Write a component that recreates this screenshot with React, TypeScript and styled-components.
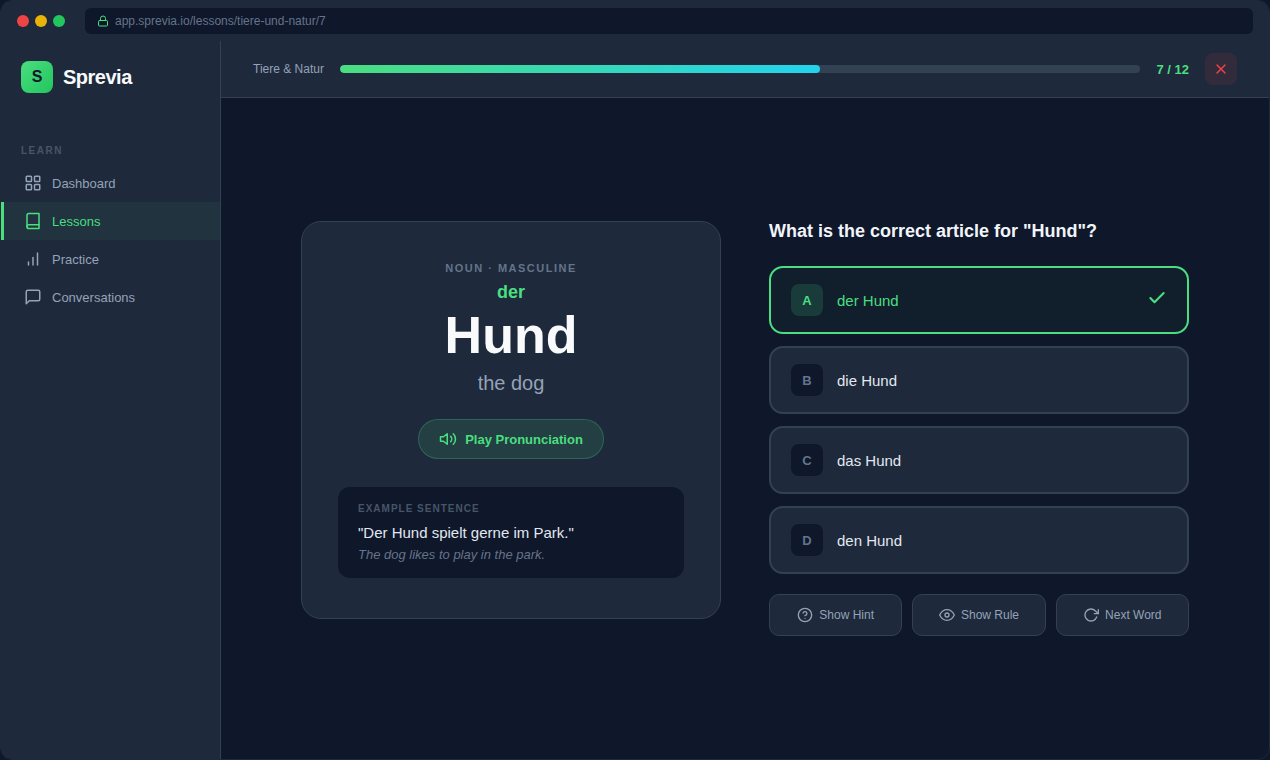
import React from "react";
import styled, { createGlobalStyle } from "styled-components";

const Global = createGlobalStyle`
  html, body { margin: 0; padding: 0; background: #0f172a; }
  * { box-sizing: border-box; }
  body { font-family: "Liberation Sans", Arial, sans-serif; }
`;
const Window = styled.div`
  width: 1270px; height: 760px; display: flex; flex-direction: column; overflow: hidden;
  background: #0f172a; border: 1px solid #1e293b; border-radius: 12px;
`;
const TitleBar = styled.div`
  height: 40px; flex: none; display: flex; align-items: center; gap: 20px; padding: 0 16px; background: #1e293b;
`;
const Dots = styled.div`display: flex; gap: 6px;`;
const Dot = styled.span<{ $c: string }>`width: 12px; height: 12px; border-radius: 50%; background: ${p => p.$c};`;
const Address = styled.div`
  flex: 1; height: 26px; background: #0f172a; border-radius: 6px; padding: 0 12px; display: flex; align-items: center; gap: 6px;
  font-size: 12px; color: #64748b;
  svg { color: #4ade80; }
`;
const Body = styled.div`flex: 1; display: flex; min-height: 0;`;
const Sidebar = styled.aside`
  width: 220px; flex: none; background: #1e293b; border-right: 1px solid #334155; display: flex; flex-direction: column; padding-top: 20px;
`;
const Brand = styled.div`display: flex; align-items: center; gap: 10px; padding: 0 20px; margin-bottom: 52px;`;
const Logo = styled.div`
  width: 32px; height: 32px; border-radius: 8px; background: linear-gradient(135deg, #4ade80, #22c55e); color: #0f172a;
  display: flex; align-items: center; justify-content: center; font-weight: 700; font-size: 16px;
`;
const BrandName = styled.div`font-size: 20px; font-weight: 700; letter-spacing: -0.5px; color: #f8fafc;`;
const SectionLabel = styled.div`font-size: 10px; font-weight: 700; letter-spacing: 1.5px; color: #475569; padding: 0 20px; margin-bottom: 7px; line-height: 12px;`;
const NavItem = styled.div<{ $active?: boolean }>`
  height: 38px; display: flex; align-items: center; gap: 10px; padding-left: 20px; font-size: 13px;
  color: ${p => (p.$active ? "#4ade80" : "#94a3b8")};
  background: ${p => (p.$active ? "rgba(74,222,128,0.06)" : "transparent")};
  border-left: 3px solid ${p => (p.$active ? "#4ade80" : "transparent")};
`;
const Main = styled.main`flex: 1; display: flex; flex-direction: column; min-width: 0;`;
const TopBar = styled.div`
  height: 57px; flex: none; background: #1e293b; border-bottom: 1px solid #334155; display: flex; align-items: center; gap: 16px; padding: 0 32px;
`;
const Topic = styled.span`font-size: 12px; color: #94a3b8;`;
const Track = styled.div`flex: 1; height: 8px; border-radius: 4px; background: #334155; overflow: hidden;`;
const Fill = styled.div`height: 100%; border-radius: 4px; background: linear-gradient(90deg, #4ade80, #22d3ee);`;
const Count = styled.span`font-size: 13px; font-weight: 700; color: #4ade80;`;
const CloseBtn = styled.button`
  width: 32px; height: 32px; border: 0; padding: 0; border-radius: 8px; background: rgba(239,68,68,0.1); color: #ef4444;
  display: flex; align-items: center; justify-content: center;
`;
const Content = styled.div`flex: 1; display: flex; align-items: center; justify-content: center; padding: 0 32px;`;
const Lesson = styled.div`display: flex; align-items: flex-start; gap: 48px;`;
const Card = styled.section`
  width: 420px; background: #1e293b; border: 1px solid #334155; border-radius: 20px; padding: 40px 36px;
  display: flex; flex-direction: column; align-items: center;
`;
const WordType = styled.div`font-size: 11px; font-weight: 700; letter-spacing: 1.5px; color: #64748b; line-height: 13px;`;
const Article = styled.div`font-size: 18px; font-weight: 700; color: #4ade80; line-height: 21px; margin-top: 7px;`;
const Word = styled.div`font-size: 52px; font-weight: 700; color: #f8fafc; line-height: 60px; margin-top: 2px;`;
const Meaning = styled.div`font-size: 20px; color: #94a3b8; line-height: 23px; margin-top: 7px;`;
const PlayBtn = styled.button`
  height: 40px; margin-top: 24px; padding: 0 20px; border-radius: 20px; border: 1px solid rgba(74,222,128,0.25); background: rgba(74,222,128,0.12);
  color: #4ade80; font: 700 13px "Liberation Sans", Arial, sans-serif; display: flex; align-items: center; gap: 8px;
`;
const Example = styled.div`
  align-self: stretch; margin-top: 28px; background: #0f172a; border-radius: 12px; padding: 16px 20px;
`;
const ExampleLabel = styled.div`font-size: 10px; font-weight: 700; letter-spacing: 1px; color: #475569; line-height: 12px;`;
const Sentence = styled.div`font-size: 15px; color: #e2e8f0; line-height: 17px; margin-top: 9px;`;
const Translation = styled.div`font-size: 13px; font-style: italic; color: #64748b; line-height: 15px; margin-top: 6px;`;
const Quiz = styled.section`width: 420px; display: flex; flex-direction: column;`;
const Question = styled.h2`margin: 0 0 24px; font-size: 18px; font-weight: 700; line-height: 21px; color: #f1f5f9;`;
const Options = styled.div`display: flex; flex-direction: column; gap: 12px;`;
const Option = styled.div<{ $ok?: boolean }>`
  height: 68px; display: flex; align-items: center; gap: 14px; padding: 0 20px; border-radius: 14px;
  border: 2px solid ${p => (p.$ok ? "#4ade80" : "#334155")};
  background: ${p => (p.$ok ? "rgba(74,222,128,0.04)" : "#1e293b")};
  font-size: 15px; color: ${p => (p.$ok ? "#4ade80" : "#e2e8f0")};
`;
const Letter = styled.div<{ $ok?: boolean }>`
  width: 32px; height: 32px; border-radius: 8px; display: flex; align-items: center; justify-content: center; font-size: 13px; font-weight: 700;
  background: ${p => (p.$ok ? "rgba(74,222,128,0.15)" : "#0f172a")}; color: ${p => (p.$ok ? "#4ade80" : "#64748b")};
`;
const OptionText = styled.span`flex: 1;`;
const CheckMark = styled.svg`
  width: 20px; height: 20px; flex: none; margin-bottom: 4px; fill: none; stroke: currentColor; stroke-width: 2.5; stroke-linecap: round; stroke-linejoin: round;
`;
const Actions = styled.div`display: flex; gap: 10px; margin-top: 20px;`;
const ActionBtn = styled.button`
  flex: 1; height: 42px; border-radius: 10px; border: 1px solid #334155; background: #1e293b; color: #94a3b8;
  font: 12px "Liberation Sans", Arial, sans-serif; display: flex; align-items: center; justify-content: center; gap: 6px;
`;
const Svg = styled.svg<{ $s: number }>`
  width: ${p => p.$s}px; height: ${p => p.$s}px; flex: none; fill: none; stroke: currentColor; stroke-width: 2; stroke-linecap: round; stroke-linejoin: round;
`;

const Icon = ({ s, children }: { s: number; children: React.ReactNode }) => (
  <Svg $s={s} viewBox="0 0 24 24">{children}</Svg>
);

const navIcons = {
  grid: (
    <>
      <rect x="3" y="3" width="7" height="7" rx="1" />
      <rect x="14" y="3" width="7" height="7" rx="1" />
      <rect x="3" y="14" width="7" height="7" rx="1" />
      <rect x="14" y="14" width="7" height="7" rx="1" />
    </>
  ),
  book: (
    <>
      <path d="M4 19.5A2.5 2.5 0 0 1 6.5 17H20" />
      <path d="M6.5 2H20v20H6.5A2.5 2.5 0 0 1 4 19.5v-15A2.5 2.5 0 0 1 6.5 2z" />
    </>
  ),
  bars: (
    <>
      <path d="M18 20V4" />
      <path d="M12 20V10" />
      <path d="M6 20v-4" />
    </>
  ),
  message: <path d="M21 15a2 2 0 0 1-2 2H7l-4 4V5a2 2 0 0 1 2-2h14a2 2 0 0 1 2 2z" />,
};

const nav = [
  { label: "Dashboard", icon: navIcons.grid },
  { label: "Lessons", icon: navIcons.book, active: true },
  { label: "Practice", icon: navIcons.bars },
  { label: "Conversations", icon: navIcons.message },
];
const options = [
  { k: "A", t: "der Hund", ok: true },
  { k: "B", t: "die Hund" },
  { k: "C", t: "das Hund" },
  { k: "D", t: "den Hund" },
];

export default function App() {
  return (
    <>
      <Global />
      <Window>
        <TitleBar>
          <Dots>
            <Dot $c="#ef4444" /><Dot $c="#eab308" /><Dot $c="#22c55e" />
          </Dots>
          <Address>
            <Icon s={12}>
              <rect x="3" y="11" width="18" height="11" rx="2" />
              <path d="M7 11V7a5 5 0 0 1 10 0v4" />
            </Icon>
            app.sprevia.io/lessons/tiere-und-natur/7
          </Address>
        </TitleBar>
        <Body>
          <Sidebar>
            <Brand><Logo>S</Logo><BrandName>Sprevia</BrandName></Brand>
            <SectionLabel>LEARN</SectionLabel>
            {nav.map(({ label, icon, active }) => (
              <NavItem key={label} $active={active}><Icon s={18}>{icon}</Icon>{label}</NavItem>
            ))}
          </Sidebar>
          <Main>
            <TopBar>
              <Topic>Tiere &amp; Natur</Topic>
              <Track><Fill style={{ width: `${(480 / 800) * 100}%` }} /></Track>
              <Count>7 / 12</Count>
              <CloseBtn aria-label="Close">
                <Icon s={16}>
                  <path d="M18 6 6 18" />
                  <path d="M6 6l12 12" />
                </Icon>
              </CloseBtn>
            </TopBar>
            <Content>
              <Lesson>
                <Card>
                  <WordType>NOUN · MASCULINE</WordType>
                  <Article>der</Article>
                  <Word>Hund</Word>
                  <Meaning>the dog</Meaning>
                  <PlayBtn>
                    <Icon s={18}>
                      <polygon points="11 5 6 9 2 9 2 15 6 15 11 19 11 5" />
                      <path d="M19.07 4.93a10 10 0 0 1 0 14.14" />
                      <path d="M15.54 8.46a5 5 0 0 1 0 7.07" />
                    </Icon>
                    Play Pronunciation
                  </PlayBtn>
                  <Example>
                    <ExampleLabel>EXAMPLE SENTENCE</ExampleLabel>
                    <Sentence>"Der Hund spielt gerne im Park."</Sentence>
                    <Translation>The dog likes to play in the park.</Translation>
                  </Example>
                </Card>
                <Quiz>
                  <Question>What is the correct article for "Hund"?</Question>
                  <Options>
                    {options.map(o => (
                      <Option key={o.k} $ok={o.ok}>
                        <Letter $ok={o.ok}>{o.k}</Letter>
                        <OptionText>{o.t}</OptionText>
                        {o.ok && (
                          <CheckMark viewBox="0 0 24 24">
                            <polyline points="20 6 9 17 4 12" />
                          </CheckMark>
                        )}
                      </Option>
                    ))}
                  </Options>
                  <Actions>
                    <ActionBtn>
                      <Icon s={16}>
                        <circle cx="12" cy="12" r="10" />
                        <path d="M9.09 9a3 3 0 0 1 5.83 1c0 2-3 3-3 3" />
                        <path d="M12 17h.01" />
                      </Icon>
                      Show Hint
                    </ActionBtn>
                    <ActionBtn>
                      <Icon s={16}>
                        <path d="M1 12s4-8 11-8 11 8 11 8-4 8-11 8-11-8-11-8z" />
                        <circle cx="12" cy="12" r="3" />
                      </Icon>
                      Show Rule
                    </ActionBtn>
                    <ActionBtn>
                      <Icon s={16}>
                        <polyline points="23 4 23 10 17 10" />
                        <path d="M20.49 15a9 9 0 1 1-2.12-9.36L23 10" />
                      </Icon>
                      Next Word
                    </ActionBtn>
                  </Actions>
                </Quiz>
              </Lesson>
            </Content>
          </Main>
        </Body>
      </Window>
    </>
  );
}
